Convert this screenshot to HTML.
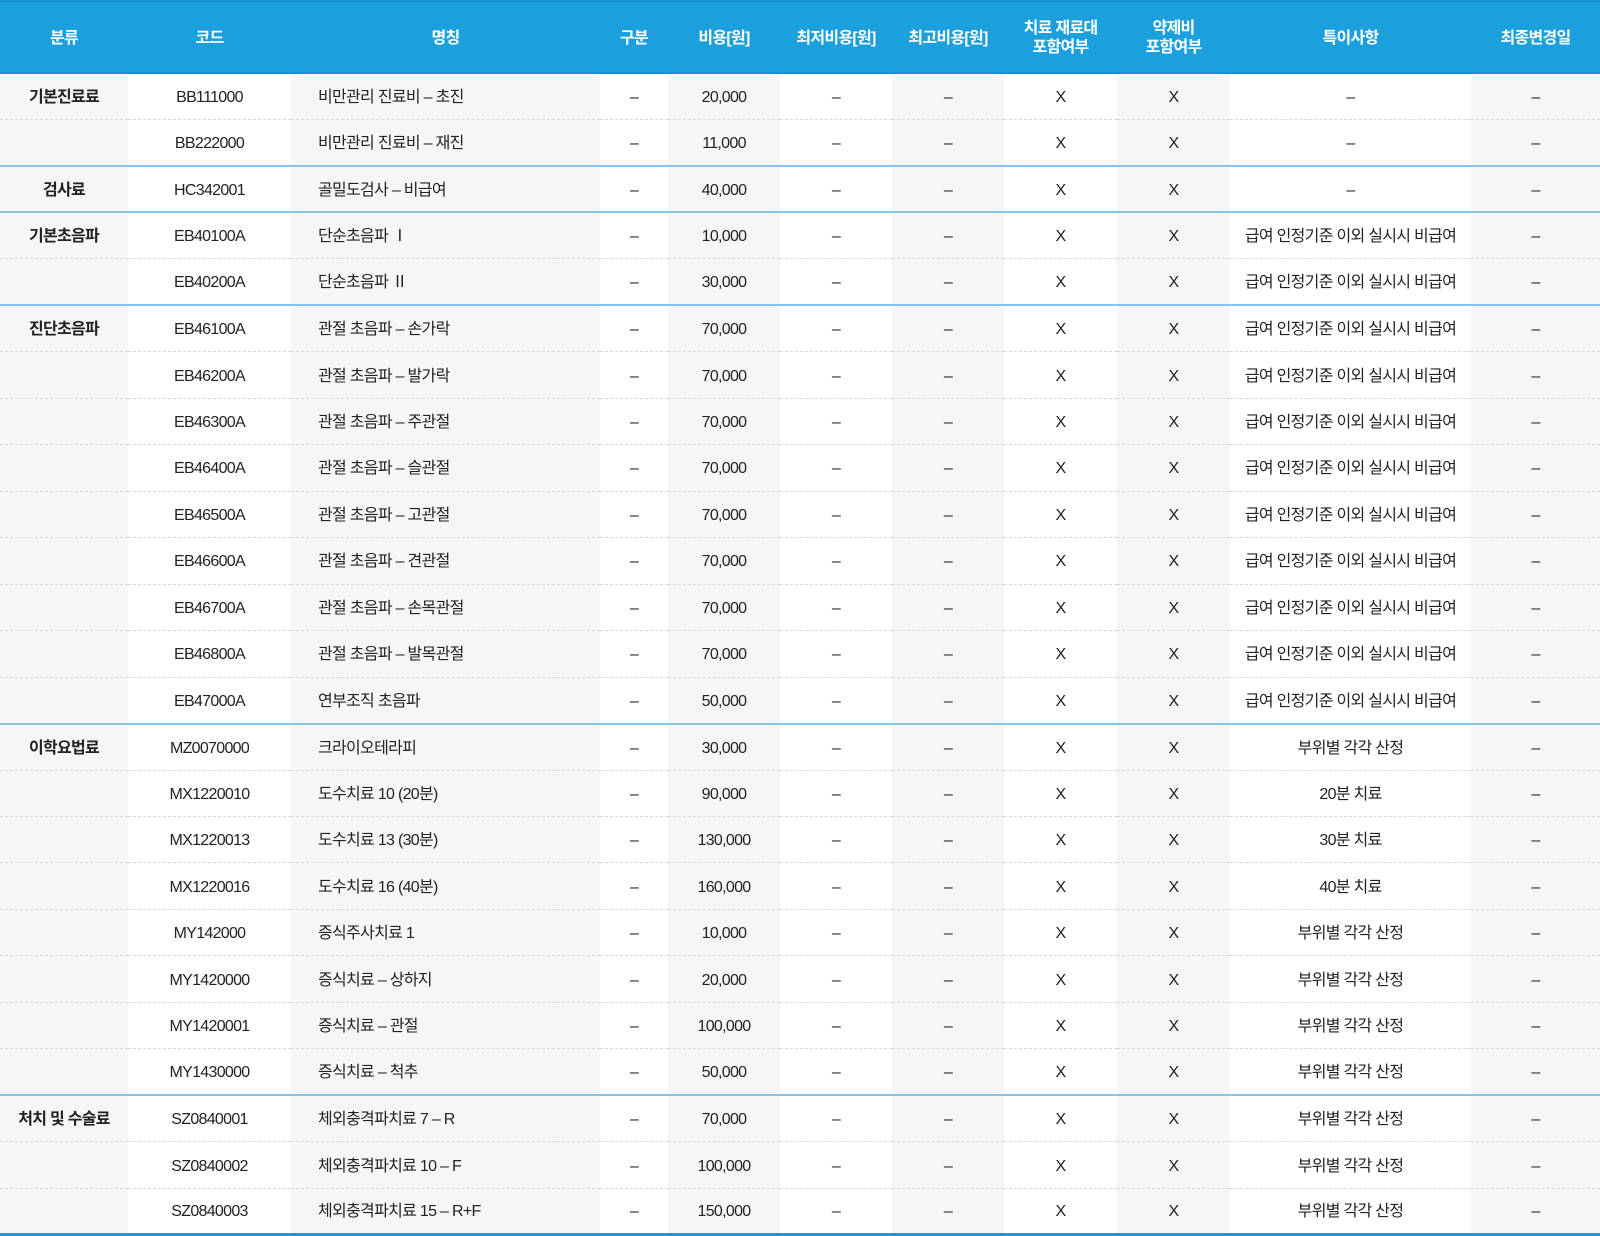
<!DOCTYPE html>
<html><head><meta charset="utf-8"><style>
*{margin:0;padding:0;box-sizing:border-box}
html,body{width:1600px;height:1236px;background:#fff;overflow:hidden}
body{font-family:"Liberation Sans","Noto Sans CJK KR",sans-serif;color:#222;font-size:16px;letter-spacing:-0.7px}
table{border-collapse:collapse;width:1600px;table-layout:fixed}
thead th{background:#1ca0dd;color:#fff;font-weight:bold;height:72px;line-height:19px;border-top:2px solid #1890cc;border-bottom:2px solid #1590d0;font-size:16px;padding-top:2px}
td{height:46.48px;line-height:20px;padding-top:3px;text-align:center;border-top:1px dashed #d8d8d8;white-space:nowrap}
td:nth-child(odd){background:#f6f6f6}
td:nth-child(even){background:#fff}
td.n{text-align:left;padding-left:27px}
td.g{font-weight:bold}
tr.s td{border-top:2px solid #86c5ea}
tbody tr:first-child td{border-top:none}
tbody tr:last-child td{border-bottom:3px solid #2a93c8}
</style></head><body>
<table>
<colgroup><col style="width:128px"><col style="width:163px"><col style="width:309px"><col style="width:68px"><col style="width:112px"><col style="width:112px"><col style="width:112px"><col style="width:113px"><col style="width:113px"><col style="width:241px"><col style="width:129px"></colgroup>
<thead><tr><th>분류</th><th>코드</th><th>명칭</th><th>구분</th><th>비용[원]</th><th>최저비용[원]</th><th>최고비용[원]</th><th>치료 재료대<br>포함여부</th><th>약제비<br>포함여부</th><th>특이사항</th><th>최종변경일</th></tr></thead>
<tbody>
<tr><td class="g">기본진료료</td><td>BB111000</td><td class="n">비만관리 진료비 – 초진</td><td>–</td><td>20,000</td><td>–</td><td>–</td><td>X</td><td>X</td><td>–</td><td>–</td></tr>
<tr><td></td><td>BB222000</td><td class="n">비만관리 진료비 – 재진</td><td>–</td><td>11,000</td><td>–</td><td>–</td><td>X</td><td>X</td><td>–</td><td>–</td></tr>
<tr class="s"><td class="g">검사료</td><td>HC342001</td><td class="n">골밀도검사 – 비급여</td><td>–</td><td>40,000</td><td>–</td><td>–</td><td>X</td><td>X</td><td>–</td><td>–</td></tr>
<tr class="s"><td class="g">기본초음파</td><td>EB40100A</td><td class="n">단순초음파 Ⅰ</td><td>–</td><td>10,000</td><td>–</td><td>–</td><td>X</td><td>X</td><td>급여 인정기준 이외 실시시 비급여</td><td>–</td></tr>
<tr><td></td><td>EB40200A</td><td class="n">단순초음파 Ⅱ</td><td>–</td><td>30,000</td><td>–</td><td>–</td><td>X</td><td>X</td><td>급여 인정기준 이외 실시시 비급여</td><td>–</td></tr>
<tr class="s"><td class="g">진단초음파</td><td>EB46100A</td><td class="n">관절 초음파 – 손가락</td><td>–</td><td>70,000</td><td>–</td><td>–</td><td>X</td><td>X</td><td>급여 인정기준 이외 실시시 비급여</td><td>–</td></tr>
<tr><td></td><td>EB46200A</td><td class="n">관절 초음파 – 발가락</td><td>–</td><td>70,000</td><td>–</td><td>–</td><td>X</td><td>X</td><td>급여 인정기준 이외 실시시 비급여</td><td>–</td></tr>
<tr><td></td><td>EB46300A</td><td class="n">관절 초음파 – 주관절</td><td>–</td><td>70,000</td><td>–</td><td>–</td><td>X</td><td>X</td><td>급여 인정기준 이외 실시시 비급여</td><td>–</td></tr>
<tr><td></td><td>EB46400A</td><td class="n">관절 초음파 – 슬관절</td><td>–</td><td>70,000</td><td>–</td><td>–</td><td>X</td><td>X</td><td>급여 인정기준 이외 실시시 비급여</td><td>–</td></tr>
<tr><td></td><td>EB46500A</td><td class="n">관절 초음파 – 고관절</td><td>–</td><td>70,000</td><td>–</td><td>–</td><td>X</td><td>X</td><td>급여 인정기준 이외 실시시 비급여</td><td>–</td></tr>
<tr><td></td><td>EB46600A</td><td class="n">관절 초음파 – 견관절</td><td>–</td><td>70,000</td><td>–</td><td>–</td><td>X</td><td>X</td><td>급여 인정기준 이외 실시시 비급여</td><td>–</td></tr>
<tr><td></td><td>EB46700A</td><td class="n">관절 초음파 – 손목관절</td><td>–</td><td>70,000</td><td>–</td><td>–</td><td>X</td><td>X</td><td>급여 인정기준 이외 실시시 비급여</td><td>–</td></tr>
<tr><td></td><td>EB46800A</td><td class="n">관절 초음파 – 발목관절</td><td>–</td><td>70,000</td><td>–</td><td>–</td><td>X</td><td>X</td><td>급여 인정기준 이외 실시시 비급여</td><td>–</td></tr>
<tr><td></td><td>EB47000A</td><td class="n">연부조직 초음파</td><td>–</td><td>50,000</td><td>–</td><td>–</td><td>X</td><td>X</td><td>급여 인정기준 이외 실시시 비급여</td><td>–</td></tr>
<tr class="s"><td class="g">이학요법료</td><td>MZ0070000</td><td class="n">크라이오테라피</td><td>–</td><td>30,000</td><td>–</td><td>–</td><td>X</td><td>X</td><td>부위별 각각 산정</td><td>–</td></tr>
<tr><td></td><td>MX1220010</td><td class="n">도수치료 10 (20분)</td><td>–</td><td>90,000</td><td>–</td><td>–</td><td>X</td><td>X</td><td>20분 치료</td><td>–</td></tr>
<tr><td></td><td>MX1220013</td><td class="n">도수치료 13 (30분)</td><td>–</td><td>130,000</td><td>–</td><td>–</td><td>X</td><td>X</td><td>30분 치료</td><td>–</td></tr>
<tr><td></td><td>MX1220016</td><td class="n">도수치료 16 (40분)</td><td>–</td><td>160,000</td><td>–</td><td>–</td><td>X</td><td>X</td><td>40분 치료</td><td>–</td></tr>
<tr><td></td><td>MY142000</td><td class="n">증식주사치료 1</td><td>–</td><td>10,000</td><td>–</td><td>–</td><td>X</td><td>X</td><td>부위별 각각 산정</td><td>–</td></tr>
<tr><td></td><td>MY1420000</td><td class="n">증식치료 – 상하지</td><td>–</td><td>20,000</td><td>–</td><td>–</td><td>X</td><td>X</td><td>부위별 각각 산정</td><td>–</td></tr>
<tr><td></td><td>MY1420001</td><td class="n">증식치료 – 관절</td><td>–</td><td>100,000</td><td>–</td><td>–</td><td>X</td><td>X</td><td>부위별 각각 산정</td><td>–</td></tr>
<tr><td></td><td>MY1430000</td><td class="n">증식치료 – 척추</td><td>–</td><td>50,000</td><td>–</td><td>–</td><td>X</td><td>X</td><td>부위별 각각 산정</td><td>–</td></tr>
<tr class="s"><td class="g">처치 및 수술료</td><td>SZ0840001</td><td class="n">체외충격파치료 7 – R</td><td>–</td><td>70,000</td><td>–</td><td>–</td><td>X</td><td>X</td><td>부위별 각각 산정</td><td>–</td></tr>
<tr><td></td><td>SZ0840002</td><td class="n">체외충격파치료 10 – F</td><td>–</td><td>100,000</td><td>–</td><td>–</td><td>X</td><td>X</td><td>부위별 각각 산정</td><td>–</td></tr>
<tr><td></td><td>SZ0840003</td><td class="n">체외충격파치료 15 – R+F</td><td>–</td><td>150,000</td><td>–</td><td>–</td><td>X</td><td>X</td><td>부위별 각각 산정</td><td>–</td></tr>
</tbody></table>
</body></html>
